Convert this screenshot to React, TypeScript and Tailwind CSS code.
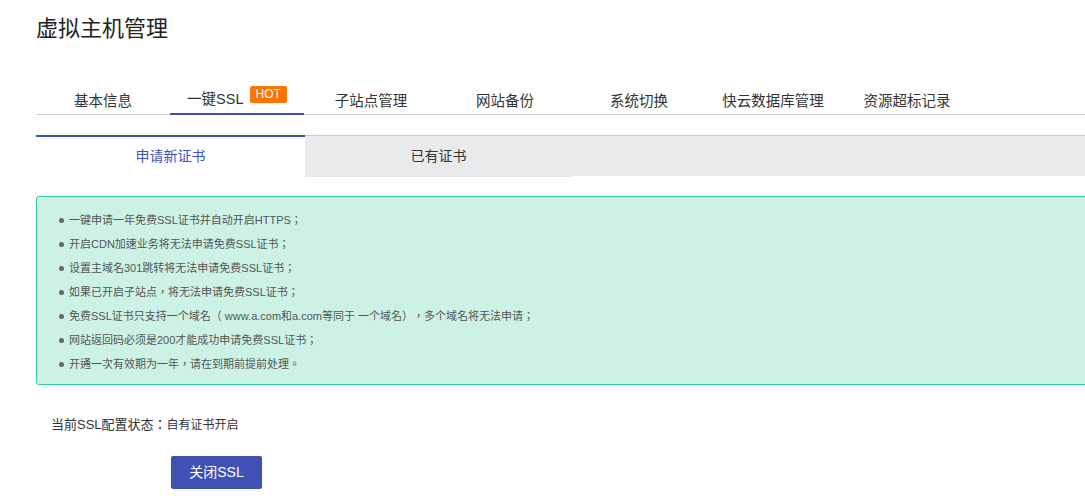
import React, { useState } from "react";

const font = { fontFamily: '"Liberation Sans", "Noto Sans CJK SC", sans-serif' };
// 居中的全角标点
const puncFont = { fontFamily: '"Liberation Sans", "Noto Sans CJK TC", "Noto Sans CJK SC", sans-serif' };

const tabs = ["基本信息", "一键SSL", "子站点管理", "网站备份", "系统切换", "快云数据库管理", "资源超标记录"];

const tips = [
  "一键申请一年免费SSL证书并自动开启HTTPS；",
  "开启CDN加速业务将无法申请免费SSL证书；",
  "设置主域名301跳转将无法申请免费SSL证书；",
  "如果已开启子站点，将无法申请免费SSL证书；",
  "免费SSL证书只支持一个域名（ www.a.com和a.com等同于 一个域名），多个域名将无法申请；",
  "网站返回码必须是200才能成功申请免费SSL证书；",
  "开通一次有效期为一年，请在到期前提前处理。"
];

export default function App() {
  const [active, setActive] = useState(1);
  const [sub, setSub] = useState(0);

  return (
    <div className="w-[1085px] h-[504px] overflow-hidden bg-white text-[#333] [text-spacing-trim:space-all]" style={font}>
      <h1 className="pl-[36px] pt-[15px] text-[22px] leading-[28px] font-normal text-[#222]">虚拟主机管理</h1>

      {/* 主导航 */}
      <div className="ml-[36px] mt-[42px] flex border-b border-[#ccc] h-[30px]">
        {tabs.map((t, i) => (
          <button
            key={t}
            onClick={() => setActive(i)}
            className={
              "flex items-end justify-center w-[134px] h-[30px] text-[14.5px] leading-[20px] pb-[4px] text-[#333] " +
              (active === i ? "border-b-2 border-[#3f51b5] -mb-px pb-[3px]" : "")
            }
          >
            <span>{t}</span>
            {i === 1 && (
              <span className="ml-[6px] mb-[6px] h-[17px] px-[6px] rounded-[2px] bg-[#ff7300] text-white text-[12px] leading-[17px]">
                HOT
              </span>
            )}
          </button>
        ))}
      </div>

      {/* 子标签 */}
      <div className="ml-[36px] mt-[20px] flex border-t border-[#ccc] bg-[#ebebec] h-[41px]">
        {["申请新证书", "已有证书"].map((t, i) => (
          <button
            key={t}
            onClick={() => setSub(i)}
            className={
              "h-[41px] text-[14px] " +
              (i === 0 ? "w-[269px] " : "w-[267px] ") +
              (sub === i
                ? "bg-white text-[#3f51b5] border-t-2 border-[#3f51b5] -mt-px"
                : "bg-[#e9eaeb] text-[#333]")
            }
          >
            {t}
          </button>
        ))}
      </div>

      {/* 提示 */}
      <div className="ml-[36px] mt-[20px] w-[1060px] h-[189px] rounded-[3px] border border-[#2fcf98] bg-[#ccf2e6] pt-[11px] pl-[22px]">
        <ul className="flex flex-col" style={puncFont}>
          {tips.map((t) => (
            <li key={t} className="flex items-center h-[24px] text-[11px] text-[#555]">
              <span className="w-[5px] h-[5px] rounded-full bg-[#666] mr-[5px]" />
              {t}
            </li>
          ))}
        </ul>
      </div>

      <div className="pl-[51px] mt-[30px] text-[13px] text-[#333]" style={puncFont}>
        当前SSL配置状态：<span className="text-[12px]">自有证书开启</span>
      </div>

      <div className="pl-[171px] mt-[21px]">
        <button className="w-[91px] h-[33px] rounded-[2px] bg-[#4150b5] text-white text-[14px]">关闭SSL</button>
      </div>
    </div>
  );
}
